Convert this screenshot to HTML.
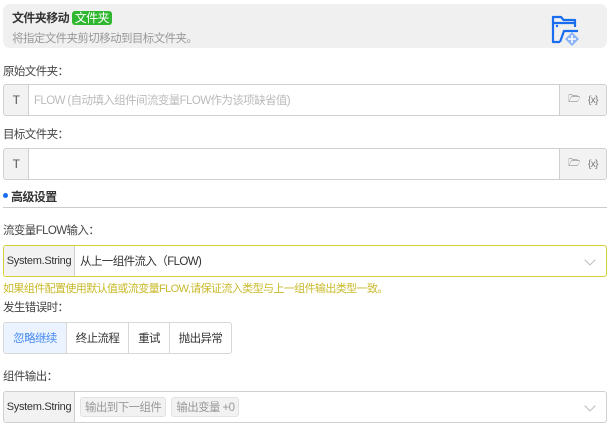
<!DOCTYPE html><html><head><meta charset="utf-8"><style>
*{box-sizing:border-box;margin:0;padding:0}
body{width:615px;height:427px;background:#fff;font-family:"Liberation Sans","Noto Sans CJK SC",sans-serif;font-size:11px;letter-spacing:-0.6px;color:#333;position:relative;overflow:hidden}
.a{position:absolute}
.hdr{left:3px;top:4px;width:604px;height:44px;background:#f0f0f0;border-radius:7px}
.lbl{left:3px;color:#444;font-size:11.5px}
.inp{left:3px;width:604px;height:32px;border:1px solid #d0d0d0;border-radius:3px;display:flex;overflow:hidden}
.t{width:25px;background:#f2f2f2;border-right:1px solid #d0d0d0;display:flex;align-items:center;justify-content:center;font-size:12px;font-weight:normal;color:#555}
.mid{flex:1;display:flex;align-items:center;padding-left:5px;color:#bbb;font-size:11.5px}
.rt{width:47px;background:#f2f2f2;border-left:1px solid #d0d0d0;display:flex;align-items:center;justify-content:space-around;font-size:10px;color:#777;padding:0 4px}
.sl{width:71px;background:#f2f2f2;border-right:1px solid #d0d0d0;display:flex;align-items:center;justify-content:center;font-size:11px;letter-spacing:-0.3px;color:#333;white-space:nowrap}
.chev{position:absolute;right:12px;top:10px;width:8px;height:8px;border-right:1px solid #bbb;border-bottom:1px solid #bbb;transform:rotate(45deg)}
.btns{left:3px;top:322px;height:32px;display:flex;border:1px solid #d8d8d8;border-radius:3px;overflow:hidden}
.btns div{display:flex;align-items:center;justify-content:center;border-left:1px solid #d8d8d8;color:#333;font-size:11.5px}
.tag{background:#f2f2f2;border:1px solid #e2e2e2;border-radius:3px;padding:1px 4px;color:#999;margin-right:5px}
</style></head><body>
<div class="a hdr"></div>
<div class="a" style="left:12px;top:9px;font-weight:bold;color:#333;font-size:12px">文件夹移动 <span style="background:#2fb82f;color:#fff;font-weight:normal;padding:0 3px;border-radius:3px">文件夹</span></div>
<div class="a" style="left:12px;top:30px;color:#999;font-size:11.5px">将指定文件夹剪切移动到目标文件夹。</div>
<svg class="a" style="left:550px;top:14px" width="32" height="32" viewBox="0 0 32 32"><path d="M10 28H3V3h8l2.5 3H25v7" fill="none" stroke="#1a6cf0" stroke-width="2.2" stroke-linejoin="round"/><path d="M3 9h22" fill="none" stroke="#1a6cf0" stroke-width="2.2"/><circle cx="7" cy="12" r="1.2" fill="#1a6cf0"/><path d="M10 28l4-11h14" fill="none" stroke="#1a6cf0" stroke-width="2.2" stroke-linejoin="round"/><path d="M22 18l7 7-7 7-7-7z" fill="#8ab4f5"/><path d="M22 21v8M18 25h8" stroke="#fff" stroke-width="1.5"/></svg>
<div class="a lbl" style="top:63px">原始文件夹：</div>
<div class="a inp" style="top:84px"><div class="t">T</div><div class="mid">FLOW (自动填入组件间流变量FLOW作为该项缺省值)</div><div class="rt"><span>🗁</span><span>{x}</span></div></div>
<div class="a lbl" style="top:126px">目标文件夹：</div>
<div class="a inp" style="top:148px"><div class="t">T</div><div class="mid"></div><div class="rt"><span>🗁</span><span>{x}</span></div></div>
<div class="a" style="left:3px;top:193px;width:5px;height:5px;border-radius:50%;background:#1a6cf0"></div>
<div class="a" style="left:11px;top:188px;font-weight:bold;color:#333;font-size:12px">高级设置</div>
<div class="a" style="left:3px;top:207px;width:604px;height:1px;background:#ccc"></div>
<div class="a lbl" style="top:222px">流变量FLOW输入：</div>
<div class="a inp" style="top:245px;border-color:#d4cf3a"><div class="sl">System.String</div><div class="mid" style="color:#333">从上一组件流入（FLOW)</div><div class="chev"></div></div>
<div class="a" style="left:3px;top:280px;color:#c9b92a">如果组件配置使用默认值或流变量FLOW,请保证流入类型与上一组件输出类型一致。</div>
<div class="a lbl" style="top:299px">发生错误时：</div>
<div class="a btns"><div style="width:62px;border-left:0;background:#eaf3ff;color:#4a8cf0">忽略继续</div><div style="width:62px">终止流程</div><div style="width:41px">重试</div><div style="width:62px">抛出异常</div></div>
<div class="a lbl" style="top:368px">组件输出：</div>
<div class="a inp" style="top:391px"><div class="sl">System.String</div><div class="mid"><span class="tag">输出到下一组件</span><span class="tag">输出变量 +0</span></div><div class="chev"></div></div>
</body></html>
